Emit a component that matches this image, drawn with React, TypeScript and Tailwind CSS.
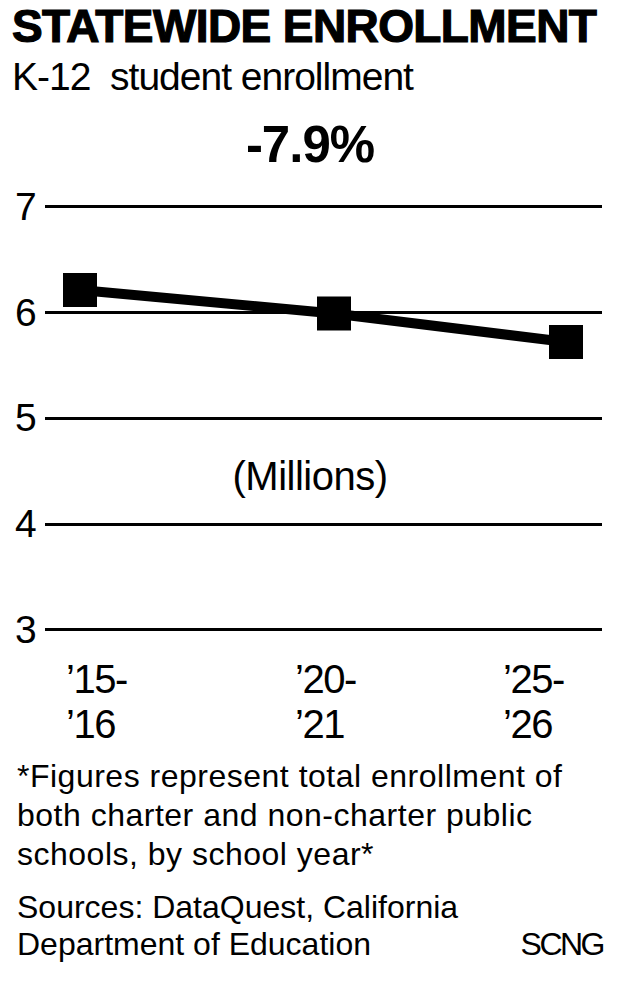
import React from "react";

function GridRow({ label }: { label: string }) {
  return (
    <div className="flex h-[42px] items-center">
      <span className="w-[45px] pl-[15px] text-[39px] leading-[42px]">{label}</span>
      <div className="mr-[18px] h-[3px] flex-1 bg-black" />
    </div>
  );
}

export default function App() {
  const pts = [
    { x: 80, y: 104 },
    { x: 334, y: 127.5 },
    { x: 566, y: 156 },
  ];
  return (
    <div className="h-[987px] w-[620px] overflow-hidden bg-white text-black [font-family:'Liberation_Sans',Arial,sans-serif]">
      <h1 className="pl-[12px] pt-[3px] text-[46px] font-bold leading-[46px] tracking-[-0.6px] [-webkit-text-stroke:1.2px_#000]">
        STATEWIDE ENROLLMENT
      </h1>
      <p className="mt-[8.4px] whitespace-pre pl-[12px] text-[39px] leading-[40px] tracking-[-1px]">K-12  student enrollment</p>
      <p className="mt-[21.3px] text-center text-[51px] font-bold leading-[51px] tracking-[-1px]">-7.9%</p>

      <div className="relative mt-[16.2px]">
        <GridRow label="7" />
        <div className="h-[63.75px]" />
        <GridRow label="6" />
        <div className="h-[63.75px]" />
        <GridRow label="5" />
        <div className="flex h-[63.75px] items-center justify-center pt-[10px] text-[40px] leading-[40px] tracking-[-0.5px]">
          (Millions)
        </div>
        <GridRow label="4" />
        <div className="h-[63.75px]" />
        <GridRow label="3" />
        <svg className="absolute left-0 top-0" width="620" height="465" viewBox="0 0 620 465">
          <polyline
            points={pts.map((p) => `${p.x},${p.y}`).join(" ")}
            fill="none"
            stroke="#000"
            strokeWidth="10"
          />
          {pts.map((p, i) => (
            <rect key={i} x={p.x - 17} y={p.y - 17} width="34" height="34" fill="#000" />
          ))}
        </svg>
      </div>

      <div className="mt-[6.6px] flex pl-[66px] text-[40px] leading-[45px] tracking-[-1.5px]">
        <div className="w-[229px]">’15-<br />’16</div>
        <div className="w-[208px]">’20-<br />’21</div>
        <div>’25-<br />’26</div>
      </div>

      <p className="mt-[10px] whitespace-nowrap pl-[17px] text-[32px] leading-[39px] tracking-[0.5px]">
        *Figures represent total enrollment of
        <br />
        both charter and non-charter public
        <br />
        schools, by school year*
      </p>

      <div className="mt-[14.4px] flex items-end justify-between pl-[17px] pr-[17px] text-[32px] leading-[37px]">
        <p className="whitespace-nowrap">
          Sources: DataQuest, California
          <br />
          Department of Education
        </p>
        <span className="tracking-[-2.5px]">SCNG</span>
      </div>
    </div>
  );
}
